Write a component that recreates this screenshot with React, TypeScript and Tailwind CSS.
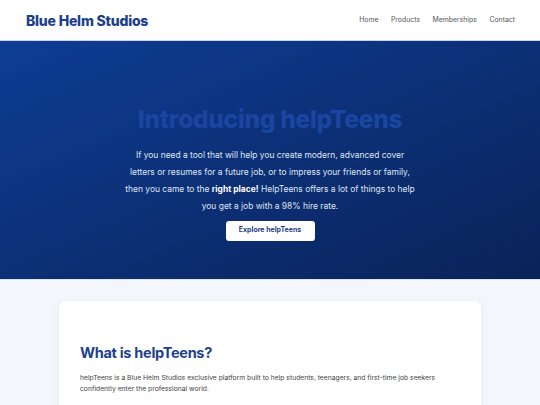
export default function App() {
  return (
    <div className="min-h-screen bg-[#f3f6fa] font-['Inter',sans-serif]">
      <header className="h-[41px] bg-white flex items-center justify-between pl-[26px] pr-[25px] border-b border-[#c9d4e6]">
        <div className="text-[14px] font-extrabold text-[#1c3f8c] tracking-[-0.2px]">Blue Helm Studios</div>
        <nav className="flex gap-[12.5px] text-[6.9px] text-[#555] pt-px">
          <span>Home</span>
          <span>Products</span>
          <span>Memberships</span>
          <span>Contact</span>
        </nav>
      </header>

      <section className="h-[239px] bg-gradient-to-br from-[#0d3d95] to-[#0a2359] flex flex-col items-center pt-[66px] border-b border-[#dbe4f3]">
        <h1 className="text-[24.5px] font-extrabold text-[#1a45a0] leading-none tracking-[-0.3px]">Introducing helpTeens</h1>
        <p className="mt-[15px] w-[294px] text-center text-[8.45px] leading-[17px] text-[#dfe6f3]">
          If you need a tool that will help you create modern, advanced cover letters or resumes for a future job, or to impress your friends or family, then you came to the <b className="text-white">right place!</b> HelpTeens offers a lot of things to help you get a job with a 98% hire rate.
        </p>
        <button className="mt-[6px] w-[89px] h-[20px] bg-white rounded-[3px] text-[7px] font-bold text-[#1e3d85]">Explore helpTeens</button>
      </section>

      <main className="px-[59px] pt-[21px]">
        <div className="bg-white rounded-[7px] shadow-[0_2px_10px_rgba(20,40,90,0.06)] px-[21px] pt-[45px] pb-[30px]">
          <h2 className="text-[14.5px] font-bold text-[#1e3f8c] leading-none tracking-[-0.3px]">What is helpTeens?</h2>
          <p className="mt-[11px] text-[6.75px] leading-[11px] text-[#444]">
            helpTeens is a Blue Helm Studios exclusive platform built to help students, teenagers, and first-time job seekers confidently enter the professional world.
          </p>
        </div>
      </main>
    </div>
  );
}
